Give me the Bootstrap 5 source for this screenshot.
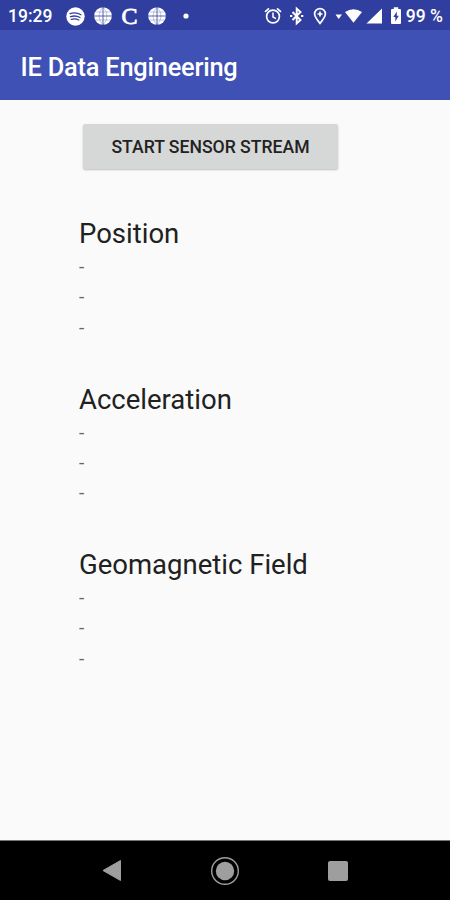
<!DOCTYPE html>
<html lang="en">
<head>
<meta charset="utf-8">
<meta name="viewport" content="width=device-width, initial-scale=1">
<title>IE Data Engineering</title>
<link href="https://cdn.jsdelivr.net/npm/bootstrap@5.3.0/dist/css/bootstrap.min.css" rel="stylesheet">
<style>
  body { font-family: Roboto, "Liberation Sans", sans-serif; background: #fafafa; color: #212121; }
  svg { display: block; flex: none; }
  .status-bar { height: 30px; background: #303f9f; color: #fff; font-size: 17.5px; font-weight: 500; line-height: 30px; padding: 2px 7px 0 8px; }
  .clock { width: 57.5px; }
  .notices { gap: 9px; }
  .serif-c { font: 400 24px/26px "Liberation Serif", serif; -webkit-text-stroke: .8px #fff; width: 18px; text-align: center; }
  .app-bar { height: 70px; background: #3f51b5; padding: 0 20.5px; }
  .app-title { font-size: 25.4px; font-weight: 500; line-height: 34px; letter-spacing: -.22px; color: #fff; margin-top: 4px; }
  .content-area { padding: 24px 79px 0; }
  .stream-btn { --bs-btn-border-radius: 2px; width: 255px; height: 45px; margin-left: 4px; background: #d6d7d7; color: #222; border: 0; padding: 2px 0 0; font-size: 17.6px; font-weight: 500; box-shadow: 0 1px 2px rgba(0,0,0,.24); }
  .readings { margin-top: 47px; }
  .reading { height: 165.5px; }
  .reading-title { font-size: 27.5px; font-weight: 400; line-height: 36px; margin: 0; white-space: nowrap; }
  .reading-value { font-size: 19px; line-height: 30.3px; height: 30.3px; color: #666; }
  .nav-keys { height: 60px; background: #000; border-top: 1px solid #777; padding: 0 98px; }
</style>
<script src="https://cdn.jsdelivr.net/npm/bootstrap@5.3.0/dist/js/bootstrap.bundle.min.js"></script>
</head>
<body class="vh-100 d-flex flex-column overflow-hidden">
<div class="status-bar d-flex align-items-center justify-content-between">
  <div class="d-flex align-items-center">
    <span class="clock">19:29</span>
    <div class="notices d-flex align-items-center">
      <svg width="19" height="19" viewBox="0 0 19 19"><circle cx="9.5" cy="9.5" r="9.2" fill="#fff"/><path d="M4 6.7Q9.7 4.8 15 7.7M4.5 9.7Q9.5 8 14 10.5M5.3 12.4Q9.3 11.2 12.8 13" fill="none" stroke="#303f9f" stroke-width="1.3" stroke-linecap="round"/></svg>
      <svg width="18" height="18" viewBox="0 0 18 18"><circle cx="9" cy="9" r="8.8" fill="#fff"/><path d="M9 0V18M0 9H18" stroke="#303f9f" stroke-width=".8"/><path d="M2 5H16M2 13H16M9 0Q1 9 9 18M9 0Q17 9 9 18" fill="none" stroke="#303f9f" stroke-width=".3"/></svg>
      <span class="serif-c">C</span>
      <svg width="18" height="18" viewBox="0 0 18 18"><circle cx="9" cy="9" r="8.8" fill="#fff"/><path d="M9 0V18M0 9H18" stroke="#303f9f" stroke-width=".8"/><path d="M2 5H16M2 13H16M9 0Q1 9 9 18M9 0Q17 9 9 18" fill="none" stroke="#303f9f" stroke-width=".3"/></svg>
      <svg class="ms-2" width="6" height="6" viewBox="0 0 6 6"><circle cx="3" cy="3" r="2.6" fill="#fff"/></svg>
    </div>
  </div>
  <div class="d-flex align-items-center">
    <svg width="142" height="20" viewBox="264 6 142 20" fill="none" stroke="#fff">
      <circle cx="273" cy="16.5" r="6.4" stroke-width="1.7"/><path d="M273 12.5V17L276 18.7" stroke-width="1.5"/><path d="M265 11.8L269 8.4M281 11.8L277 8.4" stroke-width="1.7"/>
      <path d="M292.5 12L300.5 20L296.7 23.3V8.7L300.5 12L292.5 20" stroke-width="1.9"/><path d="M290 16H292.3M301 16H303.3" stroke-width="2"/>
      <path d="M320 23.4C317 19.7 314.6 16.7 314.6 14A5.4 5.4 0 0 1 325.4 14C325.4 16.7 323 19.7 320 23.4Z" stroke-width="1.7"/><path d="M320 11.5V16.5M317.5 14H322.5" stroke-width="1.7"/>
      <path d="M335.5 14.5H342L338.7 19Z" fill="#fff" stroke="none"/>
      <path d="M345 12.1Q353.5 6.5 362 12.1L353.5 22.8Z" fill="#fff" stroke="none"/>
      <path d="M366.5 23.5L382 8.5V23.5Z" fill="#fff" stroke="none"/>
      <path d="M391 10Q391 9 392 9H393.8V7.3H398.2V9H400Q401 9 401 10V23Q401 24 400 24H392Q391 24 391 23Z" fill="#fff" stroke="none"/><path d="M396.8 11.5L393.3 17H395.3V21.5L398.8 15.7H396.8Z" fill="#303f9f" stroke="none"/>
    </svg>
    <span class="text-nowrap">99 %</span>
  </div>
</div>
<header class="app-bar d-flex align-items-center">
  <h1 class="app-title mb-0">IE Data Engineering</h1>
</header>
<main class="content-area flex-grow-1">
  <button type="button" class="btn stream-btn text-uppercase">Start sensor stream</button>
  <div class="readings">
    <section class="reading"><h2 class="reading-title">Position</h2><div class="reading-value">-</div><div class="reading-value">-</div><div class="reading-value">-</div></section>
    <section class="reading"><h2 class="reading-title">Acceleration</h2><div class="reading-value">-</div><div class="reading-value">-</div><div class="reading-value">-</div></section>
    <section class="reading"><h2 class="reading-title">Geomagnetic Field</h2><div class="reading-value">-</div><div class="reading-value">-</div><div class="reading-value">-</div></section>
  </div>
</main>
<nav class="nav-keys d-flex align-items-center justify-content-between">
  <svg width="28" height="28" viewBox="98 857 28 28"><path d="M103 870.5L120.5 860.5V880.5Z" fill="#9e9e9e" stroke="#9e9e9e" stroke-linejoin="round"/></svg>
  <svg width="30" height="30" viewBox="0 0 30 30"><circle cx="15" cy="15" r="13.3" fill="none" stroke="#9e9e9e" stroke-width="1.4"/><circle cx="15" cy="15" r="9.2" fill="#9e9e9e"/></svg>
  <svg width="28" height="28" viewBox="0 0 28 28"><rect x="4" y="4" width="20" height="20" rx="2" fill="#9e9e9e"/></svg>
</nav>
</body>
</html>
